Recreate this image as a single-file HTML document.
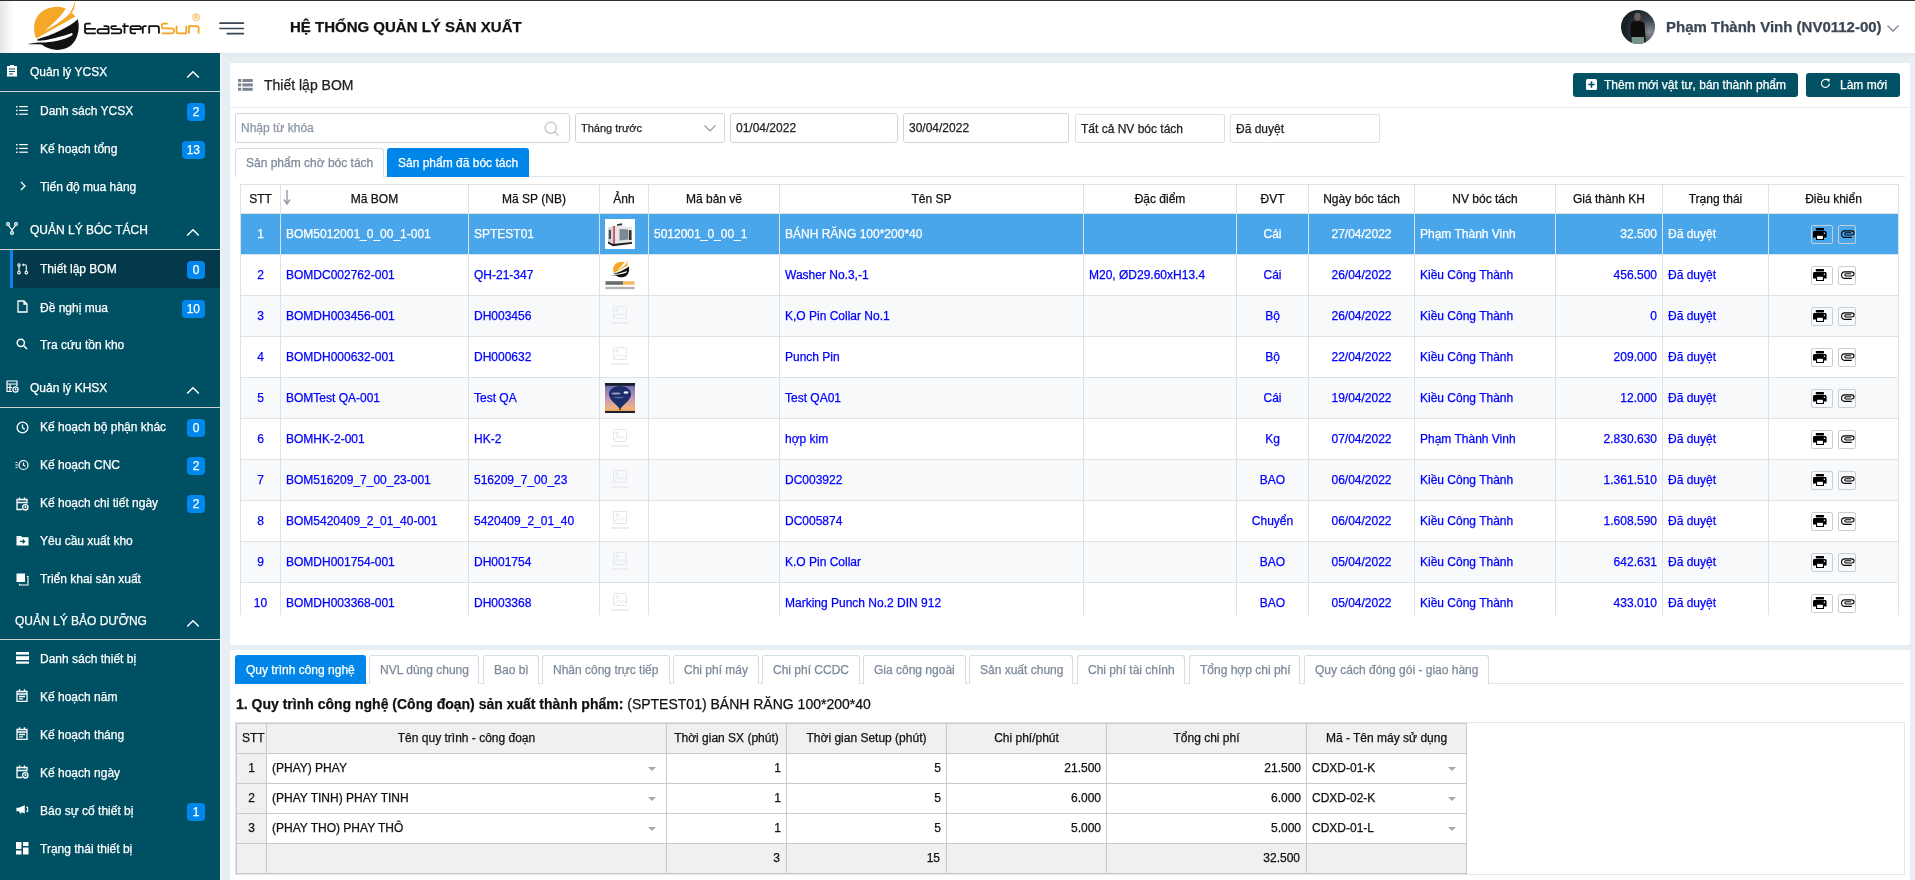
<!DOCTYPE html><html><head><meta charset="utf-8"><title>Thiết lập BOM</title><style>
*{box-sizing:border-box;margin:0;padding:0}
html,body{width:1915px;height:880px;overflow:hidden}
body{position:relative;background:#fff;font-family:"Liberation Sans",sans-serif;font-size:12px;color:#222}
#root{-webkit-text-stroke-width:0.25px}
.abs{position:absolute}
.topline{position:absolute;left:0;top:0;width:1915px;height:1px;background:#2c2e2e}
.lgrad{position:absolute;left:0;top:1px;width:14px;height:52px;background:linear-gradient(to right,#e3e5e7,#fff)}
.title{position:absolute;left:290px;top:18px;font-weight:bold;font-size:15px;line-height:18px;color:#111;white-space:nowrap}
.uname{position:absolute;left:1666px;top:18px;font-weight:bold;font-size:15px;line-height:18px;color:#3b4753;white-space:nowrap}
.side{position:absolute;left:0;top:53px;width:220px;height:827px;background:#005064}
.sep{position:absolute;left:0;width:220px;height:1px;background:#cfd2cf}
.grp{position:absolute;left:0;width:220px;height:38px;line-height:38px;color:#fff;font-size:12px;white-space:nowrap}
.grp .t{position:absolute;left:30px;top:0}
.item{position:absolute;left:0;width:220px;height:38px;line-height:38px;color:#fff;font-size:12px;white-space:nowrap}
.item .t{position:absolute;left:40px;top:0}
.item.act{left:10px;width:210px;background:#03394a;border-left:3px solid #0787ec}
.item.act .t{left:27px}
.badge{position:absolute;right:15px;top:11px;height:18px;min-width:18px;padding:0 5px;border-radius:4px;background:#0087ec;color:#fff;font-size:12px;line-height:18px;text-align:center}
.ico{position:absolute}
.main{position:absolute;left:221px;top:53px;width:1694px;height:827px;background:linear-gradient(to bottom,#dfe6eb 0,#e7eff2 4px,#e7eff2 100%)}
.wline{position:absolute;left:220px;top:53px;width:1px;height:827px;background:#eef4f7}
.panel{position:absolute;background:#fff;border-radius:4px}
.btn{position:absolute;top:73px;height:24px;background:#015064;border-radius:3px;color:#fff;font-size:12px;line-height:24px;white-space:nowrap}
.inp{position:absolute;height:30px;border:1px solid #cfd6dc;border-radius:3px;background:#fff;font-size:12px;line-height:28px;white-space:nowrap;color:#222}
.tab{position:absolute;height:29px;border:1px solid #d5dce2;border-bottom:none;border-radius:3px 3px 0 0;background:#fff;color:#7d8a99;font-size:12px;line-height:29px;padding:0 10px;white-space:nowrap}
.tab.on{background:#0085e9;border-color:#0085e9;color:#fff}
table{border-collapse:collapse;table-layout:fixed}
.mt{position:absolute;left:240px;top:184px}
.mt td,.mt th{border:1px solid #dde2e7;font-size:12px;font-weight:normal;white-space:nowrap;overflow:hidden;padding:0 5px}
.mt th{height:29px;color:#111;text-align:center;background:#fff}
.mt td{height:41px;color:#0000ff}
.mt tr.odd td{background:#f7f9fb}
.mt tr.sel td{background:#49a6eb;color:#fff}
.c{text-align:center}.r{text-align:right}
.bt{position:absolute;left:236px;top:723px}
.bt td{border:1px solid #c9c9c9;font-size:12px;height:30px;white-space:nowrap;overflow:hidden;padding:0 5px 2px;color:#111}
.bt tr.h td{background:#f0f0f0;text-align:center}
.bt tr.f td{background:#f0f0f0}
.bt tr.f td.r{padding-right:6px}
.dd{position:relative}
.caret{position:absolute;right:10px;top:13px;width:0;height:0;border-left:4px solid transparent;border-right:4px solid transparent;border-top:4px solid #a9a9a9}
.ibtn{display:inline-block;vertical-align:middle;height:19px;border:1px solid #c8ced4;border-radius:2px;background:transparent;position:relative}
</style></head><body><div id="root" style="position:absolute;left:0;top:0;width:1915px;height:880px;overflow:hidden;will-change:transform">
<div class="topline"></div><div class="lgrad"></div>
<svg class="abs" style="left:20px;top:0" width="70" height="53" viewBox="0 0 1162 880">
<path d="M760,140 C600,70 380,130 290,270 C210,390 225,540 270,640 L920,275 L850,200 Z" fill="#f5a828"/>
<path d="M415,510 C560,380 700,250 760,140 L850,200 C720,330 560,440 415,510 Z" fill="#fff"/>
<path d="M832,198 C870,150 900,90 905,12 C922,95 898,165 860,210 Z" fill="#f5a828"/>
<path d="M960,320 C1000,480 960,660 840,760 C720,850 520,860 360,740 C260,730 180,740 130,730 C200,710 330,700 420,705 C600,690 800,640 870,580 C880,560 870,545 850,550 C700,600 480,670 290,675 L290,650 C520,590 800,460 960,320 Z" fill="#111"/>
</svg>
<svg class="abs" style="left:80px;top:8px" width="130" height="32" viewBox="80 8 130 32" fill="none" stroke-linecap="butt" stroke-linejoin="round">
<g stroke="#111" stroke-width="1.8">
<path d="M90.8,23.7 L86.8,23.7 Q85,23.7 85,25.5 L85,31.5 Q85,33.3 86.8,33.3 L95.8,33.3 M85,28.8 L95.8,28.8"/>
<path d="M103.6,26.1 L106.8,26.1 Q108.6,26.1 108.6,27.9 L108.6,33.3 L99.4,33.3 Q97.6,33.3 97.6,31.5 L97.6,30.9 Q97.6,29.1 99.4,29.1 L108.6,29.1"/>
<path d="M116.6,26.1 L112.8,26.1 Q111.2,26.1 111.2,27.6 Q111.2,29.1 112.8,29.1 L119.6,29.1 Q121.3,29.1 121.3,31.2 Q121.3,33.3 119.5,33.3 L111,33.3"/>
<path d="M124.5,23.2 L124.5,33.4 M122.3,26.2 L128.7,26.2"/>
<path d="M136,33.3 L132.3,33.3 Q130.5,33.3 130.5,31.5 L130.5,27.9 Q130.5,26.1 132.3,26.1 L139.1,26.1 Q140.9,26.1 140.9,27.9 L140.9,29.1 L130.5,29.1"/>
<path d="M142.8,33.5 L142.8,27.8 Q142.8,26.1 144.6,26.1 L146.6,26.1"/>
<path d="M149.2,33.5 L149.2,26.1 L157.1,26.1 Q158.9,26.1 158.9,27.9 L158.9,33.5"/>
</g>
<g stroke="#f5a41f" stroke-width="1.8">
<path d="M167.8,23.6 L163.6,23.6 Q161.8,23.6 161.8,25.6 L161.8,26.3 Q161.8,28.3 163.6,28.3 L172,28.3 Q173.9,28.3 173.9,30.4 L173.9,31.5 Q173.9,33.4 172,33.4 L161.6,33.4"/>
<path d="M176.5,25.8 L176.5,31.6 Q176.5,33.4 178.3,33.4 L186.3,33.4 L186.3,25.8"/>
<path d="M189,33.5 L189,26.1 L196.8,26.1 Q198.6,26.1 198.6,27.9 L198.6,33.5"/>
<circle cx="196.2" cy="17.2" r="3.5" stroke-width="0.7"/>
<path d="M195.1,19.3 L195.1,15.2 L196.6,15.2 Q197.6,15.2 197.6,16.2 Q197.6,17.2 196.6,17.2 L195.1,17.2 M196.5,17.2 L197.7,19.3" stroke-width="0.7"/>
</g>
</svg>
<svg class="abs" style="left:218px;top:20px" width="28" height="16" viewBox="0 0 28 16">
<g stroke="#3a4655" stroke-width="1.7" stroke-linecap="round"><path d="M2,3.2 L25.4,3.2 M2,8.5 L25.4,8.5 M9.3,13.7 L25.4,13.7"/></g></svg>
<div class="title">HỆ THỐNG QUẢN LÝ SẢN XUẤT</div>
<svg class="abs" style="left:1621px;top:10px" width="34" height="34" viewBox="0 0 34 34">
<defs><radialGradient id="av" cx="85%" cy="65%" r="75%"><stop offset="0" stop-color="#8a8e98"/><stop offset="0.5" stop-color="#3a4046"/><stop offset="1" stop-color="#182226"/></radialGradient>
<clipPath id="avc"><circle cx="17" cy="17" r="17"/></clipPath><filter id="avb" x="-20%" y="-20%" width="140%" height="140%"><feGaussianBlur stdDeviation="0.7"/></filter></defs>
<circle cx="17" cy="17" r="17" fill="url(#av)"/>
<g clip-path="url(#avc)"><g filter="url(#avb)"><ellipse cx="16.5" cy="6.8" rx="3.2" ry="4" fill="#6e5e58"/><path d="M9.5,34 L9.8,14 C10,12 12.5,11.3 16.5,11.3 C20.5,11.3 23,12 23.5,14 L25,34 Z" fill="#0c0c0c"/><path d="M10.5,27 L23,27 L23.5,34 L10.5,34 Z" fill="#75938b"/></g></g>
</svg>
<div class="uname">Phạm Thành Vinh (NV0112-00)</div>
<svg class="abs" style="left:1886px;top:23px" width="14" height="11" viewBox="0 0 14 11"><path d="M1.5,2.5 L7,8 L12.5,2.5" fill="none" stroke="#7b8794" stroke-width="1.3"/></svg>
<div class="side"></div>
<div class="grp" style="top:53px"><span class="t" style="left:30px">Quản lý YCSX</span></div>
<div class="ico" style="left:6px;top:64px"><svg width="12" height="13" viewBox="0 0 12 13"><path d="M1,2 L4,2 L4,1 L8,1 L8,2 L11,2 L11,12.5 L1,12.5 Z" fill="#fff"/><path d="M3,5 L9,5 M3,7.5 L9,7.5 M3,10 L7,10" stroke="#005064" stroke-width="1.2"/></svg></div>
<div class="ico" style="left:186px;top:68px"><svg width="14" height="9" viewBox="0 0 14 9"><path d="M1.2,7.5 L7,1.8 L12.8,7.5" fill="none" stroke="#fff" stroke-width="1.5"/></svg></div>
<div class="sep" style="top:91px"></div>
<div class="item" style="top:92px"><span class="t">Danh sách YCSX</span><span class="badge">2</span></div>
<div class="ico" style="left:16px;top:105px;line-height:0"><svg width="12" height="11" viewBox="0 0 12 11"><g fill="#fff"><rect x="0" y="1" width="1.6" height="1.4"/><rect x="0" y="4.8" width="1.6" height="1.4"/><rect x="0" y="8.6" width="1.6" height="1.4"/><rect x="3.2" y="1" width="8.6" height="1.2"/><rect x="3.2" y="4.8" width="8.6" height="1.2"/><rect x="3.2" y="8.6" width="8.6" height="1.2"/></g></svg></div>
<div class="item" style="top:130px"><span class="t">Kế hoạch tổng</span><span class="badge">13</span></div>
<div class="ico" style="left:16px;top:143px;line-height:0"><svg width="12" height="11" viewBox="0 0 12 11"><g fill="#fff"><rect x="0" y="1" width="1.6" height="1.4"/><rect x="0" y="4.8" width="1.6" height="1.4"/><rect x="0" y="8.6" width="1.6" height="1.4"/><rect x="3.2" y="1" width="8.6" height="1.2"/><rect x="3.2" y="4.8" width="8.6" height="1.2"/><rect x="3.2" y="8.6" width="8.6" height="1.2"/></g></svg></div>
<div class="item" style="top:168px"><span class="t">Tiến độ mua hàng</span></div>
<div class="ico" style="left:20px;top:181px;line-height:0"><svg width="6" height="10" viewBox="0 0 6 10"><path d="M1,1 L5,5 L1,9" stroke="#fff" fill="none" stroke-width="1.3"/></svg></div>
<div class="grp" style="top:211px"><span class="t" style="left:30px">QUẢN LÝ BÓC TÁCH</span></div>
<div class="ico" style="left:6px;top:222px"><svg width="12" height="13" viewBox="0 0 12 13"><g stroke="#fff" fill="none" stroke-width="1.2"><circle cx="2" cy="2" r="1.4"/><circle cx="10" cy="2" r="1.4"/><circle cx="6" cy="11" r="1.4"/><path d="M2.5,3.3 L6,8 L9.5,3.3 M6,8 L6,9.6"/></g></svg></div>
<div class="ico" style="left:186px;top:226px"><svg width="14" height="9" viewBox="0 0 14 9"><path d="M1.2,7.5 L7,1.8 L12.8,7.5" fill="none" stroke="#fff" stroke-width="1.5"/></svg></div>
<div class="sep" style="top:249px"></div>
<div class="item act" style="top:250px"><span class="t">Thiết lập BOM</span><span class="badge">0</span></div>
<div class="ico" style="left:17px;top:263px;line-height:0"><svg width="12" height="12" viewBox="0 0 12 12"><g stroke="#fff" fill="none" stroke-width="1.1"><circle cx="2" cy="1.9" r="1.2"/><circle cx="2" cy="9.6" r="1.3"/><circle cx="9.3" cy="9.6" r="1.3"/><path d="M2,3.1 L2,8.3 M9.3,8.3 L9.3,3.2 C9.3,2.3 8.8,1.8 8,1.8 L6,1.8"/><path d="M6.8,0.2 L5,1.8 L6.8,3.4 Z" fill="#fff" stroke="none"/></g></svg></div>
<div class="item" style="top:289px"><span class="t">Đề nghị mua</span><span class="badge">10</span></div>
<div class="ico" style="left:17px;top:300px;line-height:0"><svg width="11" height="13" viewBox="0 0 11 13"><path d="M1,1 L7,1 L10,4 L10,12 L1,12 Z M7,1 L7,4 L10,4" stroke="#fff" fill="none" stroke-width="1.3"/></svg></div>
<div class="item" style="top:326px"><span class="t">Tra cứu tồn kho</span></div>
<div class="ico" style="left:16px;top:338px;line-height:0"><svg width="12" height="12" viewBox="0 0 12 12"><g stroke="#fff" fill="none" stroke-width="1.5"><circle cx="4.8" cy="4.8" r="3.6"/><path d="M7.5,7.5 L11,11"/></g></svg></div>
<div class="grp" style="top:369px"><span class="t" style="left:30px">Quản lý KHSX</span></div>
<div class="ico" style="left:6px;top:380px"><svg width="13" height="13" viewBox="0 0 13 13"><g stroke="#fff" fill="none" stroke-width="1.2"><path d="M6,11.5 L1,11.5 L1,1 L11,1 L11,6 M1,4 L11,4 M4,4 L4,11.5 M1,7.5 L6,7.5"/><circle cx="9.5" cy="9.5" r="2.6"/><path d="M9.5,8.2 L9.5,9.6 L10.6,9.6"/></g></svg></div>
<div class="ico" style="left:186px;top:384px"><svg width="14" height="9" viewBox="0 0 14 9"><path d="M1.2,7.5 L7,1.8 L12.8,7.5" fill="none" stroke="#fff" stroke-width="1.5"/></svg></div>
<div class="sep" style="top:407px"></div>
<div class="item" style="top:408px"><span class="t">Kế hoạch bộ phận khác</span><span class="badge">0</span></div>
<div class="ico" style="left:16px;top:421px;line-height:0"><svg width="13" height="13" viewBox="0 0 13 13"><g stroke="#fff" fill="none" stroke-width="1.3"><circle cx="6.5" cy="6.5" r="5.4"/><path d="M6.5,3.5 L6.5,6.8 L8.8,8.2"/></g></svg></div>
<div class="item" style="top:446px"><span class="t">Kế hoạch CNC</span><span class="badge">2</span></div>
<div class="ico" style="left:15px;top:459px;line-height:0"><svg width="14" height="12" viewBox="0 0 14 12"><g stroke="#fff" fill="none" stroke-width="1.2"><circle cx="8.5" cy="6" r="4.5"/><path d="M8.5,3.6 L8.5,6.2 L10.3,7.3 M0.5,3.5 L2.5,3.5 M0.5,6 L2.8,6 M0.5,8.5 L2.5,8.5"/></g></svg></div>
<div class="item" style="top:484px"><span class="t">Kế hoạch chi tiết ngày</span><span class="badge">2</span></div>
<div class="ico" style="left:16px;top:497px;line-height:0"><svg width="13" height="14" viewBox="0 0 13 14"><g stroke="#fff" fill="none" stroke-width="1.3"><path d="M6,12.5 L1,12.5 L1,2.5 L11,2.5 L11,6.5 M1,5.5 L11,5.5 M3.5,0.5 L3.5,3.5 M8.5,0.5 L8.5,3.5"/><circle cx="9.3" cy="10.3" r="2.7" fill="#005064"/><path d="M9.3,9 L9.3,10.5 L10.4,10.5"/></g></svg></div>
<div class="item" style="top:522px"><span class="t">Yêu cầu xuất kho</span></div>
<div class="ico" style="left:16px;top:535px;line-height:0"><svg width="13" height="11" viewBox="0 0 13 11"><path d="M0.5,1 L5,1 L6.3,2.3 L12.5,2.3 L12.5,10.5 L0.5,10.5 Z" fill="#fff"/><path d="M4,6.4 L8.3,6.4 M6.8,4.6 L8.6,6.4 L6.8,8.2" stroke="#005064" stroke-width="1.3" fill="none"/></svg></div>
<div class="item" style="top:560px"><span class="t">Triển khai sản xuất</span></div>
<div class="ico" style="left:16px;top:573px;line-height:0"><svg width="13" height="13" viewBox="0 0 13 13"><rect x="0.5" y="0.5" width="8.5" height="8.5" fill="#fff"/><path d="M10.8,3.5 L12,3.5 L12,12 L3.5,12 L3.5,10.8" stroke="#fff" stroke-width="1.1" fill="none"/></svg></div>
<div class="grp" style="top:602px"><span class="t" style="left:15px">QUẢN LÝ BẢO DƯỠNG</span></div>
<div class="ico" style="left:186px;top:617px"><svg width="14" height="9" viewBox="0 0 14 9"><path d="M1.2,7.5 L7,1.8 L12.8,7.5" fill="none" stroke="#fff" stroke-width="1.5"/></svg></div>
<div class="sep" style="top:639px"></div>
<div class="item" style="top:640px"><span class="t">Danh sách thiết bị</span></div>
<div class="ico" style="left:16px;top:652px;line-height:0"><svg width="13" height="12" viewBox="0 0 13 12"><g fill="#fff"><rect x="0" y="0" width="13" height="2.6"/><rect x="0" y="4.2" width="13" height="3.8"/><rect x="0" y="9.5" width="13" height="2.2"/></g></svg></div>
<div class="item" style="top:678px"><span class="t">Kế hoạch năm</span></div>
<div class="ico" style="left:16px;top:689px;line-height:0"><svg width="12" height="13" viewBox="0 0 12 13"><g stroke="#fff" fill="none" stroke-width="1.3"><path d="M1,2.5 L11,2.5 L11,12.3 L1,12.3 Z M1,5 L11,5 M3.5,0.3 L3.5,3 M8.5,0.3 L8.5,3 M3,7.5 L9,7.5 M3,9.8 L7,9.8"/></g></svg></div>
<div class="item" style="top:716px"><span class="t">Kế hoạch tháng</span></div>
<div class="ico" style="left:16px;top:727px;line-height:0"><svg width="12" height="13" viewBox="0 0 12 13"><g stroke="#fff" fill="none" stroke-width="1.3"><path d="M1,2.5 L11,2.5 L11,12.3 L1,12.3 Z M1,5 L11,5 M3.5,0.3 L3.5,3 M8.5,0.3 L8.5,3 M3,7.5 L9,7.5 M3,9.8 L7,9.8"/></g></svg></div>
<div class="item" style="top:754px"><span class="t">Kế hoạch ngày</span></div>
<div class="ico" style="left:16px;top:765px;line-height:0"><svg width="13" height="14" viewBox="0 0 13 14"><g stroke="#fff" fill="none" stroke-width="1.3"><path d="M6,12.5 L1,12.5 L1,2.5 L11,2.5 L11,6.5 M1,5.5 L11,5.5 M3.5,0.5 L3.5,3.5 M8.5,0.5 L8.5,3.5"/><circle cx="9.3" cy="10.3" r="2.7" fill="#005064"/><path d="M9.3,9 L9.3,10.5 L10.4,10.5"/></g></svg></div>
<div class="item" style="top:792px"><span class="t">Báo sự cố thiết bị</span><span class="badge">1</span></div>
<div class="ico" style="left:16px;top:805px;line-height:0"><svg width="13" height="9" viewBox="0 0 13 9"><path d="M0.4,2.8 L2.6,2.8 L8.8,0.3 L8.8,8.5 L2.6,6.2 L0.4,6.2 Z" fill="#fff"/><path d="M3,6.2 L4.2,8.6 L5.6,8.6 L4.8,6.6 Z" fill="#fff"/><path d="M10.4,2.4 L11.6,2.4 L11.6,6.4 L10.4,6.4" fill="none" stroke="#fff" stroke-width="1.1"/></svg></div>
<div class="item" style="top:830px"><span class="t">Trạng thái thiết bị</span></div>
<div class="ico" style="left:16px;top:842px;line-height:0"><svg width="13" height="13" viewBox="0 0 13 13"><g fill="#fff"><rect x="0" y="0" width="5.5" height="7"/><rect x="7" y="0" width="5.5" height="4"/><rect x="0" y="8.5" width="5.5" height="4"/><rect x="7" y="5.5" width="5.5" height="7"/></g></svg></div>
<div class="wline"></div><div class="main"></div>
<div class="panel" style="left:230px;top:63px;width:1680px;height:582px;border-radius:0 0 2px 2px"></div>
<div class="abs" style="left:230px;top:107px;width:1680px;height:1px;background:#e9edf0"></div>
<svg class="abs" style="left:238px;top:79px" width="15" height="12" viewBox="0 0 15 12"><g fill="#7a8594"><rect x="0" y="0" width="3.2" height="3"/><rect x="0" y="4.4" width="3.2" height="3"/><rect x="0" y="8.8" width="3.2" height="3"/><rect x="4.4" y="0" width="10.4" height="3"/><rect x="4.4" y="4.4" width="10.4" height="3"/><rect x="4.4" y="8.8" width="10.4" height="3"/></g></svg>
<div class="abs" style="left:264px;top:77px;font-size:14px;line-height:17px;color:#222;white-space:nowrap">Thiết lập BOM</div>
<div class="btn" style="left:1573px;width:225px"><svg class="abs" style="left:13px;top:6px" width="11" height="11" viewBox="0 0 11 11"><rect x="0" y="0" width="11" height="11" rx="1.5" fill="#fff"/><path d="M5.5,2.3 L5.5,8.7 M2.3,5.5 L8.7,5.5" stroke="#015064" stroke-width="1.6"/></svg><span class="abs" style="left:31px;top:0">Thêm mới vật tư, bán thành phẩm</span></div>
<div class="btn" style="left:1806px;width:94px"><svg class="abs" style="left:14px;top:5px" width="11" height="11" viewBox="0 0 11 11"><path d="M9.4,5.6 A4,4 0 1 1 7.9,2.3" fill="none" stroke="#fff" stroke-width="1.15"/><path d="M6.2,0.6 L9.8,0.9 L9.2,4.4 Z" fill="#fff"/></svg><span class="abs" style="left:34px;top:0">Làm mới</span></div>
<div class="inp" style="left:235px;top:113px;width:335px;color:#8c97a4;padding-left:5px">Nhập từ khóa<svg class="abs" style="left:308px;top:7px" width="16" height="16" viewBox="0 0 16 16"><g fill="none" stroke="#bcc3ca" stroke-width="1.2"><circle cx="6.8" cy="6.8" r="5.6"/><path d="M10.8,10.8 L14.8,14.8"/></g></svg></div>
<div class="inp" style="left:575px;top:113px;width:150px;padding-left:5px;font-size:11px">Tháng trước<svg class="abs" style="left:127px;top:10px" width="14" height="9" viewBox="0 0 14 9"><path d="M1.5,1.5 L7,7 L12.5,1.5" fill="none" stroke="#8e99a5" stroke-width="1.2"/></svg></div>
<div class="inp" style="left:730px;top:113px;width:168px;padding-left:5px">01/04/2022</div>
<div class="inp" style="left:903px;top:113px;width:166px;padding-left:5px">30/04/2022</div>
<div class="inp" style="left:1075px;top:114px;width:150px;height:29px;padding-left:5px;border-color:#dde2e6;border-radius:2px">Tất cả NV bóc tách</div>
<div class="inp" style="left:1230px;top:114px;width:150px;height:29px;padding-left:5px;border-color:#dde2e6;border-radius:2px">Đã duyệt</div>
<div class="abs" style="left:235px;top:176px;width:1670px;height:1px;background:#dfe4e8"></div>
<div class="tab" style="left:235px;top:148px;width:149px">Sản phẩm chờ bóc tách</div>
<div class="tab on" style="left:387px;top:148px;width:142px">Sản phẩm đã bóc tách</div>
<div class="abs" style="left:240px;top:184px;width:1659px;height:431px;overflow:hidden">
<table class="mt" style="left:0;top:0;width:1659px">
<colgroup><col style="width:40px"><col style="width:188px"><col style="width:131px"><col style="width:49px"><col style="width:131px"><col style="width:304px"><col style="width:153px"><col style="width:72px"><col style="width:106px"><col style="width:141px"><col style="width:107px"><col style="width:106px"><col style="width:130px"></colgroup>
<tr><th>STT</th><th>Mã BOM</th><th>Mã SP (NB)</th><th>Ảnh</th><th>Mã bản vẽ</th><th>Tên SP</th><th>Đặc điểm</th><th>ĐVT</th><th>Ngày bóc tách</th><th>NV bóc tách</th><th>Giá thành KH</th><th>Trạng thái</th><th>Điều khiển</th></tr>
<tr class="sel">
<td class="c">1</td><td>BOM5012001_0_00_1-001</td><td>SPTEST01</td><td style="padding:0 0 0 5px"><svg width="30" height="30" viewBox="0 0 30 30" style="display:block"><rect width="30" height="30" fill="#fff"/><path d="M3,9 L8,6.5 L8,26 L3,23 Z" fill="#d3d5d8"/><rect x="3.8" y="11" width="2.2" height="9" fill="#4a4f55"/><path d="M8,6.5 L27,8 L27,24 L8,26 Z" fill="#e6e7e9"/><path d="M8.2,7 L10,7 L10,26 L8.2,26 Z" fill="#cf4b58"/><path d="M14.5,10 L23,10.5 L23,20.5 L14.5,21.5 Z" fill="#7d8894"/><path d="M23.8,11 L26.5,11.2 L26.5,21 L23.8,21 Z" fill="#2e3236"/><path d="M3,22.5 L8,25 L27,23 L27,24.8 L8,27.3 L3,24.6 Z" fill="#1f2124"/><path d="M12,5.2 L17,4.3 L17,6.2 L12,6.7 Z" fill="#2a2d30"/></svg></td><td>5012001_0_00_1</td><td>BÁNH RĂNG 100*200*40</td><td></td><td class="c">Cái</td><td class="c">27/04/2022</td><td>Phạm Thành Vinh</td><td class="r">32.500</td><td>Đã duyệt</td><td><div style="text-align:center;line-height:0;font-size:0"><span class="ibtn" style="width:22px;margin-right:5px"><svg class="abs" style="left:1px;top:2px" width="14" height="12" viewBox="0 0 14 12"><rect x="2.8" y="0" width="8.2" height="2.4" rx="0.6" fill="#000"/><path d="M1.5,3 L12.1,3 C13,3 13.6,3.6 13.6,4.5 L13.6,9.4 L11,9.4 L11,7 L3,7 L3,9.4 L0,9.4 L0,4.5 C0,3.6 0.6,3 1.5,3 Z" fill="#000"/><path d="M3,7 L11,7 L11,12 L3,12 Z" fill="#000"/><rect x="4.1" y="7.8" width="5.8" height="3.2" fill="#fff"/><circle cx="11.4" cy="5.3" r="0.75" fill="#fff"/></svg></span><span class="ibtn" style="width:18px"><svg class="abs" style="left:1.5px;top:4px" width="14" height="8.4" viewBox="0 0 15 9"><path d="M11.5,7.9 L3.8,7.9 C1.8,7.9 0.6,6.2 0.6,4.4 C0.6,2.5 1.9,0.9 3.9,0.9 L11.4,0.9 C13,0.9 14,2 14,3.3 C14,4.6 12.9,5.3 11.4,5.3 L5.2,5.3 C4.4,5.3 4,4.9 4,4.1 C4,3.4 4.5,3 5.2,3 L11,3" fill="none" stroke="#000" stroke-width="1.15"/></svg></span></div></td>
</tr>
<tr class="">
<td class="c">2</td><td>BOMDC002762-001</td><td>QH-21-347</td><td style="padding:0 0 0 5px"><svg width="30" height="30" viewBox="0 0 30 30" style="display:block"><svg x="3" y="-0.7" width="25.3" height="19.2" viewBox="0 0 1162 880">
<path d="M760,140 C600,70 380,130 290,270 C210,390 225,540 270,640 L920,275 L850,200 Z" fill="#f5a828"/>
<path d="M415,510 C560,380 700,250 760,140 L850,200 C720,330 560,440 415,510 Z" fill="#fff"/>
<path d="M800,235 C860,170 895,100 905,15 C925,100 900,170 860,215 Z" fill="#f5a828"/>
<path d="M960,320 C1000,480 960,660 840,760 C720,850 520,860 360,740 C260,730 180,740 130,730 C200,710 330,700 420,705 C600,690 800,640 870,580 C880,560 870,545 850,550 C700,600 480,670 290,675 L290,650 C520,590 800,460 960,320 Z" fill="#111"/>
</svg><rect x="0.5" y="21.2" width="17.5" height="3.6" fill="#3a3a3a" opacity="0.75"/><rect x="18" y="21.2" width="11.5" height="3.6" fill="#f2ad3a" opacity="0.8"/><rect x="0.5" y="26.8" width="29" height="2.4" fill="#555" opacity="0.45"/></svg></td><td></td><td>Washer No.3,-1</td><td>M20, ØD29.60xH13.4</td><td class="c">Cái</td><td class="c">26/04/2022</td><td>Kiều Công Thành</td><td class="r">456.500</td><td>Đã duyệt</td><td><div style="text-align:center;line-height:0;font-size:0"><span class="ibtn" style="width:22px;margin-right:5px"><svg class="abs" style="left:1px;top:2px" width="14" height="12" viewBox="0 0 14 12"><rect x="2.8" y="0" width="8.2" height="2.4" rx="0.6" fill="#000"/><path d="M1.5,3 L12.1,3 C13,3 13.6,3.6 13.6,4.5 L13.6,9.4 L11,9.4 L11,7 L3,7 L3,9.4 L0,9.4 L0,4.5 C0,3.6 0.6,3 1.5,3 Z" fill="#000"/><path d="M3,7 L11,7 L11,12 L3,12 Z" fill="#000"/><rect x="4.1" y="7.8" width="5.8" height="3.2" fill="#fff"/><circle cx="11.4" cy="5.3" r="0.75" fill="#fff"/></svg></span><span class="ibtn" style="width:18px"><svg class="abs" style="left:1.5px;top:4px" width="14" height="8.4" viewBox="0 0 15 9"><path d="M11.5,7.9 L3.8,7.9 C1.8,7.9 0.6,6.2 0.6,4.4 C0.6,2.5 1.9,0.9 3.9,0.9 L11.4,0.9 C13,0.9 14,2 14,3.3 C14,4.6 12.9,5.3 11.4,5.3 L5.2,5.3 C4.4,5.3 4,4.9 4,4.1 C4,3.4 4.5,3 5.2,3 L11,3" fill="none" stroke="#000" stroke-width="1.15"/></svg></span></div></td>
</tr>
<tr class="odd">
<td class="c">3</td><td>BOMDH003456-001</td><td>DH003456</td><td style="padding:0 0 0 5px"><svg width="30" height="30" viewBox="0 0 30 30" style="display:block"><g fill="none" stroke="#e3e6ea" stroke-width="1"><rect x="8.5" y="5.5" width="13" height="12" rx="1"/><path d="M9,16 L13,12 L16,14.5 L18.5,12.5 L21,15"/><circle cx="12" cy="9" r="1.2"/></g><rect x="6" y="21" width="18" height="2" fill="#eceef1"/></svg></td><td></td><td>K,O Pin Collar No.1</td><td></td><td class="c">Bộ</td><td class="c">26/04/2022</td><td>Kiều Công Thành</td><td class="r">0</td><td>Đã duyệt</td><td><div style="text-align:center;line-height:0;font-size:0"><span class="ibtn" style="width:22px;margin-right:5px"><svg class="abs" style="left:1px;top:2px" width="14" height="12" viewBox="0 0 14 12"><rect x="2.8" y="0" width="8.2" height="2.4" rx="0.6" fill="#000"/><path d="M1.5,3 L12.1,3 C13,3 13.6,3.6 13.6,4.5 L13.6,9.4 L11,9.4 L11,7 L3,7 L3,9.4 L0,9.4 L0,4.5 C0,3.6 0.6,3 1.5,3 Z" fill="#000"/><path d="M3,7 L11,7 L11,12 L3,12 Z" fill="#000"/><rect x="4.1" y="7.8" width="5.8" height="3.2" fill="#fff"/><circle cx="11.4" cy="5.3" r="0.75" fill="#fff"/></svg></span><span class="ibtn" style="width:18px"><svg class="abs" style="left:1.5px;top:4px" width="14" height="8.4" viewBox="0 0 15 9"><path d="M11.5,7.9 L3.8,7.9 C1.8,7.9 0.6,6.2 0.6,4.4 C0.6,2.5 1.9,0.9 3.9,0.9 L11.4,0.9 C13,0.9 14,2 14,3.3 C14,4.6 12.9,5.3 11.4,5.3 L5.2,5.3 C4.4,5.3 4,4.9 4,4.1 C4,3.4 4.5,3 5.2,3 L11,3" fill="none" stroke="#000" stroke-width="1.15"/></svg></span></div></td>
</tr>
<tr class="">
<td class="c">4</td><td>BOMDH000632-001</td><td>DH000632</td><td style="padding:0 0 0 5px"><svg width="30" height="30" viewBox="0 0 30 30" style="display:block"><g fill="none" stroke="#e3e6ea" stroke-width="1"><rect x="8.5" y="5.5" width="13" height="12" rx="1"/><path d="M9,16 L13,12 L16,14.5 L18.5,12.5 L21,15"/><circle cx="12" cy="9" r="1.2"/></g><rect x="6" y="21" width="18" height="2" fill="#eceef1"/></svg></td><td></td><td>Punch Pin</td><td></td><td class="c">Bộ</td><td class="c">22/04/2022</td><td>Kiều Công Thành</td><td class="r">209.000</td><td>Đã duyệt</td><td><div style="text-align:center;line-height:0;font-size:0"><span class="ibtn" style="width:22px;margin-right:5px"><svg class="abs" style="left:1px;top:2px" width="14" height="12" viewBox="0 0 14 12"><rect x="2.8" y="0" width="8.2" height="2.4" rx="0.6" fill="#000"/><path d="M1.5,3 L12.1,3 C13,3 13.6,3.6 13.6,4.5 L13.6,9.4 L11,9.4 L11,7 L3,7 L3,9.4 L0,9.4 L0,4.5 C0,3.6 0.6,3 1.5,3 Z" fill="#000"/><path d="M3,7 L11,7 L11,12 L3,12 Z" fill="#000"/><rect x="4.1" y="7.8" width="5.8" height="3.2" fill="#fff"/><circle cx="11.4" cy="5.3" r="0.75" fill="#fff"/></svg></span><span class="ibtn" style="width:18px"><svg class="abs" style="left:1.5px;top:4px" width="14" height="8.4" viewBox="0 0 15 9"><path d="M11.5,7.9 L3.8,7.9 C1.8,7.9 0.6,6.2 0.6,4.4 C0.6,2.5 1.9,0.9 3.9,0.9 L11.4,0.9 C13,0.9 14,2 14,3.3 C14,4.6 12.9,5.3 11.4,5.3 L5.2,5.3 C4.4,5.3 4,4.9 4,4.1 C4,3.4 4.5,3 5.2,3 L11,3" fill="none" stroke="#000" stroke-width="1.15"/></svg></span></div></td>
</tr>
<tr class="odd">
<td class="c">5</td><td>BOMTest QA-001</td><td>Test QA</td><td style="padding:0 0 0 5px"><svg width="30" height="30" viewBox="0 0 30 30" style="display:block"><defs><linearGradient id="g5" x1="0" y1="0" x2="0" y2="1"><stop offset="0" stop-color="#1b1d2c"/><stop offset="0.08" stop-color="#1b1d2c"/><stop offset="0.1" stop-color="#6f70b4"/><stop offset="0.55" stop-color="#c89cb0"/><stop offset="0.85" stop-color="#f0b27a"/><stop offset="0.92" stop-color="#e8a060"/><stop offset="0.94" stop-color="#1e1e28"/><stop offset="1" stop-color="#1e1e28"/></linearGradient></defs><rect width="30" height="30" fill="url(#g5)"/><path d="M15,3 C8,3 3.5,7 4,12 C4.5,17 11,21 14,25 L16,25 C19,21 25.5,17 26,12 C26.5,7 22,3 15,3 Z" fill="#1d2d6a"/><ellipse cx="11" cy="10.5" rx="4.5" ry="1" fill="#9aa0c0"/><ellipse cx="21" cy="9.5" rx="2.5" ry="1.2" fill="#eef"/><ellipse cx="14" cy="14.5" rx="5" ry="0.8" fill="#5a6aa0"/><rect x="14" y="25.3" width="2" height="1.6" fill="#333"/></svg></td><td></td><td>Test QA01</td><td></td><td class="c">Cái</td><td class="c">19/04/2022</td><td>Kiều Công Thành</td><td class="r">12.000</td><td>Đã duyệt</td><td><div style="text-align:center;line-height:0;font-size:0"><span class="ibtn" style="width:22px;margin-right:5px"><svg class="abs" style="left:1px;top:2px" width="14" height="12" viewBox="0 0 14 12"><rect x="2.8" y="0" width="8.2" height="2.4" rx="0.6" fill="#000"/><path d="M1.5,3 L12.1,3 C13,3 13.6,3.6 13.6,4.5 L13.6,9.4 L11,9.4 L11,7 L3,7 L3,9.4 L0,9.4 L0,4.5 C0,3.6 0.6,3 1.5,3 Z" fill="#000"/><path d="M3,7 L11,7 L11,12 L3,12 Z" fill="#000"/><rect x="4.1" y="7.8" width="5.8" height="3.2" fill="#fff"/><circle cx="11.4" cy="5.3" r="0.75" fill="#fff"/></svg></span><span class="ibtn" style="width:18px"><svg class="abs" style="left:1.5px;top:4px" width="14" height="8.4" viewBox="0 0 15 9"><path d="M11.5,7.9 L3.8,7.9 C1.8,7.9 0.6,6.2 0.6,4.4 C0.6,2.5 1.9,0.9 3.9,0.9 L11.4,0.9 C13,0.9 14,2 14,3.3 C14,4.6 12.9,5.3 11.4,5.3 L5.2,5.3 C4.4,5.3 4,4.9 4,4.1 C4,3.4 4.5,3 5.2,3 L11,3" fill="none" stroke="#000" stroke-width="1.15"/></svg></span></div></td>
</tr>
<tr class="">
<td class="c">6</td><td>BOMHK-2-001</td><td>HK-2</td><td style="padding:0 0 0 5px"><svg width="30" height="30" viewBox="0 0 30 30" style="display:block"><g fill="none" stroke="#e3e6ea" stroke-width="1"><rect x="8.5" y="5.5" width="13" height="12" rx="1"/><path d="M9,16 L13,12 L16,14.5 L18.5,12.5 L21,15"/><circle cx="12" cy="9" r="1.2"/></g><rect x="6" y="21" width="18" height="2" fill="#eceef1"/></svg></td><td></td><td>hợp kim</td><td></td><td class="c">Kg</td><td class="c">07/04/2022</td><td>Phạm Thành Vinh</td><td class="r">2.830.630</td><td>Đã duyệt</td><td><div style="text-align:center;line-height:0;font-size:0"><span class="ibtn" style="width:22px;margin-right:5px"><svg class="abs" style="left:1px;top:2px" width="14" height="12" viewBox="0 0 14 12"><rect x="2.8" y="0" width="8.2" height="2.4" rx="0.6" fill="#000"/><path d="M1.5,3 L12.1,3 C13,3 13.6,3.6 13.6,4.5 L13.6,9.4 L11,9.4 L11,7 L3,7 L3,9.4 L0,9.4 L0,4.5 C0,3.6 0.6,3 1.5,3 Z" fill="#000"/><path d="M3,7 L11,7 L11,12 L3,12 Z" fill="#000"/><rect x="4.1" y="7.8" width="5.8" height="3.2" fill="#fff"/><circle cx="11.4" cy="5.3" r="0.75" fill="#fff"/></svg></span><span class="ibtn" style="width:18px"><svg class="abs" style="left:1.5px;top:4px" width="14" height="8.4" viewBox="0 0 15 9"><path d="M11.5,7.9 L3.8,7.9 C1.8,7.9 0.6,6.2 0.6,4.4 C0.6,2.5 1.9,0.9 3.9,0.9 L11.4,0.9 C13,0.9 14,2 14,3.3 C14,4.6 12.9,5.3 11.4,5.3 L5.2,5.3 C4.4,5.3 4,4.9 4,4.1 C4,3.4 4.5,3 5.2,3 L11,3" fill="none" stroke="#000" stroke-width="1.15"/></svg></span></div></td>
</tr>
<tr class="odd">
<td class="c">7</td><td>BOM516209_7_00_23-001</td><td>516209_7_00_23</td><td style="padding:0 0 0 5px"><svg width="30" height="30" viewBox="0 0 30 30" style="display:block"><g fill="none" stroke="#e3e6ea" stroke-width="1"><rect x="8.5" y="5.5" width="13" height="12" rx="1"/><path d="M9,16 L13,12 L16,14.5 L18.5,12.5 L21,15"/><circle cx="12" cy="9" r="1.2"/></g><rect x="6" y="21" width="18" height="2" fill="#eceef1"/></svg></td><td></td><td>DC003922</td><td></td><td class="c">BAO</td><td class="c">06/04/2022</td><td>Kiều Công Thành</td><td class="r">1.361.510</td><td>Đã duyệt</td><td><div style="text-align:center;line-height:0;font-size:0"><span class="ibtn" style="width:22px;margin-right:5px"><svg class="abs" style="left:1px;top:2px" width="14" height="12" viewBox="0 0 14 12"><rect x="2.8" y="0" width="8.2" height="2.4" rx="0.6" fill="#000"/><path d="M1.5,3 L12.1,3 C13,3 13.6,3.6 13.6,4.5 L13.6,9.4 L11,9.4 L11,7 L3,7 L3,9.4 L0,9.4 L0,4.5 C0,3.6 0.6,3 1.5,3 Z" fill="#000"/><path d="M3,7 L11,7 L11,12 L3,12 Z" fill="#000"/><rect x="4.1" y="7.8" width="5.8" height="3.2" fill="#fff"/><circle cx="11.4" cy="5.3" r="0.75" fill="#fff"/></svg></span><span class="ibtn" style="width:18px"><svg class="abs" style="left:1.5px;top:4px" width="14" height="8.4" viewBox="0 0 15 9"><path d="M11.5,7.9 L3.8,7.9 C1.8,7.9 0.6,6.2 0.6,4.4 C0.6,2.5 1.9,0.9 3.9,0.9 L11.4,0.9 C13,0.9 14,2 14,3.3 C14,4.6 12.9,5.3 11.4,5.3 L5.2,5.3 C4.4,5.3 4,4.9 4,4.1 C4,3.4 4.5,3 5.2,3 L11,3" fill="none" stroke="#000" stroke-width="1.15"/></svg></span></div></td>
</tr>
<tr class="">
<td class="c">8</td><td>BOM5420409_2_01_40-001</td><td>5420409_2_01_40</td><td style="padding:0 0 0 5px"><svg width="30" height="30" viewBox="0 0 30 30" style="display:block"><g fill="none" stroke="#e3e6ea" stroke-width="1"><rect x="8.5" y="5.5" width="13" height="12" rx="1"/><path d="M9,16 L13,12 L16,14.5 L18.5,12.5 L21,15"/><circle cx="12" cy="9" r="1.2"/></g><rect x="6" y="21" width="18" height="2" fill="#eceef1"/></svg></td><td></td><td>DC005874</td><td></td><td class="c">Chuyển</td><td class="c">06/04/2022</td><td>Kiều Công Thành</td><td class="r">1.608.590</td><td>Đã duyệt</td><td><div style="text-align:center;line-height:0;font-size:0"><span class="ibtn" style="width:22px;margin-right:5px"><svg class="abs" style="left:1px;top:2px" width="14" height="12" viewBox="0 0 14 12"><rect x="2.8" y="0" width="8.2" height="2.4" rx="0.6" fill="#000"/><path d="M1.5,3 L12.1,3 C13,3 13.6,3.6 13.6,4.5 L13.6,9.4 L11,9.4 L11,7 L3,7 L3,9.4 L0,9.4 L0,4.5 C0,3.6 0.6,3 1.5,3 Z" fill="#000"/><path d="M3,7 L11,7 L11,12 L3,12 Z" fill="#000"/><rect x="4.1" y="7.8" width="5.8" height="3.2" fill="#fff"/><circle cx="11.4" cy="5.3" r="0.75" fill="#fff"/></svg></span><span class="ibtn" style="width:18px"><svg class="abs" style="left:1.5px;top:4px" width="14" height="8.4" viewBox="0 0 15 9"><path d="M11.5,7.9 L3.8,7.9 C1.8,7.9 0.6,6.2 0.6,4.4 C0.6,2.5 1.9,0.9 3.9,0.9 L11.4,0.9 C13,0.9 14,2 14,3.3 C14,4.6 12.9,5.3 11.4,5.3 L5.2,5.3 C4.4,5.3 4,4.9 4,4.1 C4,3.4 4.5,3 5.2,3 L11,3" fill="none" stroke="#000" stroke-width="1.15"/></svg></span></div></td>
</tr>
<tr class="odd">
<td class="c">9</td><td>BOMDH001754-001</td><td>DH001754</td><td style="padding:0 0 0 5px"><svg width="30" height="30" viewBox="0 0 30 30" style="display:block"><g fill="none" stroke="#e3e6ea" stroke-width="1"><rect x="8.5" y="5.5" width="13" height="12" rx="1"/><path d="M9,16 L13,12 L16,14.5 L18.5,12.5 L21,15"/><circle cx="12" cy="9" r="1.2"/></g><rect x="6" y="21" width="18" height="2" fill="#eceef1"/></svg></td><td></td><td>K.O Pin Collar</td><td></td><td class="c">BAO</td><td class="c">05/04/2022</td><td>Kiều Công Thành</td><td class="r">642.631</td><td>Đã duyệt</td><td><div style="text-align:center;line-height:0;font-size:0"><span class="ibtn" style="width:22px;margin-right:5px"><svg class="abs" style="left:1px;top:2px" width="14" height="12" viewBox="0 0 14 12"><rect x="2.8" y="0" width="8.2" height="2.4" rx="0.6" fill="#000"/><path d="M1.5,3 L12.1,3 C13,3 13.6,3.6 13.6,4.5 L13.6,9.4 L11,9.4 L11,7 L3,7 L3,9.4 L0,9.4 L0,4.5 C0,3.6 0.6,3 1.5,3 Z" fill="#000"/><path d="M3,7 L11,7 L11,12 L3,12 Z" fill="#000"/><rect x="4.1" y="7.8" width="5.8" height="3.2" fill="#fff"/><circle cx="11.4" cy="5.3" r="0.75" fill="#fff"/></svg></span><span class="ibtn" style="width:18px"><svg class="abs" style="left:1.5px;top:4px" width="14" height="8.4" viewBox="0 0 15 9"><path d="M11.5,7.9 L3.8,7.9 C1.8,7.9 0.6,6.2 0.6,4.4 C0.6,2.5 1.9,0.9 3.9,0.9 L11.4,0.9 C13,0.9 14,2 14,3.3 C14,4.6 12.9,5.3 11.4,5.3 L5.2,5.3 C4.4,5.3 4,4.9 4,4.1 C4,3.4 4.5,3 5.2,3 L11,3" fill="none" stroke="#000" stroke-width="1.15"/></svg></span></div></td>
</tr>
<tr class="">
<td class="c">10</td><td>BOMDH003368-001</td><td>DH003368</td><td style="padding:0 0 0 5px"><svg width="30" height="30" viewBox="0 0 30 30" style="display:block"><g fill="none" stroke="#e3e6ea" stroke-width="1"><rect x="8.5" y="5.5" width="13" height="12" rx="1"/><path d="M9,16 L13,12 L16,14.5 L18.5,12.5 L21,15"/><circle cx="12" cy="9" r="1.2"/></g><rect x="6" y="21" width="18" height="2" fill="#eceef1"/></svg></td><td></td><td>Marking Punch No.2 DIN 912</td><td></td><td class="c">BAO</td><td class="c">05/04/2022</td><td>Kiều Công Thành</td><td class="r">433.010</td><td>Đã duyệt</td><td><div style="text-align:center;line-height:0;font-size:0"><span class="ibtn" style="width:22px;margin-right:5px"><svg class="abs" style="left:1px;top:2px" width="14" height="12" viewBox="0 0 14 12"><rect x="2.8" y="0" width="8.2" height="2.4" rx="0.6" fill="#000"/><path d="M1.5,3 L12.1,3 C13,3 13.6,3.6 13.6,4.5 L13.6,9.4 L11,9.4 L11,7 L3,7 L3,9.4 L0,9.4 L0,4.5 C0,3.6 0.6,3 1.5,3 Z" fill="#000"/><path d="M3,7 L11,7 L11,12 L3,12 Z" fill="#000"/><rect x="4.1" y="7.8" width="5.8" height="3.2" fill="#fff"/><circle cx="11.4" cy="5.3" r="0.75" fill="#fff"/></svg></span><span class="ibtn" style="width:18px"><svg class="abs" style="left:1.5px;top:4px" width="14" height="8.4" viewBox="0 0 15 9"><path d="M11.5,7.9 L3.8,7.9 C1.8,7.9 0.6,6.2 0.6,4.4 C0.6,2.5 1.9,0.9 3.9,0.9 L11.4,0.9 C13,0.9 14,2 14,3.3 C14,4.6 12.9,5.3 11.4,5.3 L5.2,5.3 C4.4,5.3 4,4.9 4,4.1 C4,3.4 4.5,3 5.2,3 L11,3" fill="none" stroke="#000" stroke-width="1.15"/></svg></span></div></td>
</tr>
</table></div>
<svg class="abs" style="left:283px;top:189px" width="8" height="16" viewBox="0 0 8 16"><path d="M4,1 L4,14" stroke="#8e99a8" stroke-width="1.4"/><path d="M1,10.5 L4,15 L7,10.5" fill="none" stroke="#8e99a8" stroke-width="1.4"/></svg>
<div class="panel" style="left:230px;top:650px;width:1680px;height:240px;border-radius:2px"></div>
<div class="abs" style="left:235px;top:683px;width:1669px;height:1px;background:#dfe4e8"></div>
<div class="tab on" style="left:235px;top:655px;width:131px;height:29px">Quy trình công nghệ</div>
<div class="tab" style="left:369px;top:655px;width:110px;height:29px">NVL dùng chung</div>
<div class="tab" style="left:483px;top:655px;width:56px;height:29px">Bao bì</div>
<div class="tab" style="left:542px;top:655px;width:128px;height:29px">Nhân công trực tiếp</div>
<div class="tab" style="left:673px;top:655px;width:86px;height:29px">Chi phí máy</div>
<div class="tab" style="left:762px;top:655px;width:98px;height:29px">Chi phí CCDC</div>
<div class="tab" style="left:863px;top:655px;width:103px;height:29px">Gia công ngoài</div>
<div class="tab" style="left:969px;top:655px;width:104px;height:29px">Sản xuất chung</div>
<div class="tab" style="left:1077px;top:655px;width:108px;height:29px">Chi phí tài chính</div>
<div class="tab" style="left:1189px;top:655px;width:111px;height:29px">Tổng hợp chi phí</div>
<div class="tab" style="left:1304px;top:655px;width:185px;height:29px">Quy cách đóng gói - giao hàng</div>
<div class="abs" style="left:236px;top:696px;font-size:14px;line-height:17px;color:#111;white-space:nowrap"><b>1. Quy trình công nghệ (Công đoạn) sản xuất thành phẩm:</b> (SPTEST01) BÁNH RĂNG 100*200*40</div>
<div class="abs" style="left:235px;top:722px;width:1670px;height:153px;border:1px solid #e3e6e9"></div>
<table class="bt" style="width:1231px">
<colgroup><col style="width:30px"><col style="width:400px"><col style="width:120px"><col style="width:160px"><col style="width:160px"><col style="width:200px"><col style="width:160px"></colgroup>
<tr class="h"><td>STT</td><td>Tên quy trình - công đoạn</td><td>Thời gian SX (phút)</td><td>Thời gian Setup (phút)</td><td>Chi phí/phút</td><td>Tổng chi phí</td><td>Mã - Tên máy sử dụng</td></tr>
<tr><td class="c" style="background:#f0f0f0">1</td><td class="dd">(PHAY) PHAY<span class="caret"></span></td><td class="r">1</td><td class="r">5</td><td class="r">21.500</td><td class="r">21.500</td><td class="dd">CDXD-01-K<span class="caret"></span></td></tr>
<tr><td class="c" style="background:#f0f0f0">2</td><td class="dd">(PHAY TINH) PHAY TINH<span class="caret"></span></td><td class="r">1</td><td class="r">5</td><td class="r">6.000</td><td class="r">6.000</td><td class="dd">CDXD-02-K<span class="caret"></span></td></tr>
<tr><td class="c" style="background:#f0f0f0">3</td><td class="dd">(PHAY THO) PHAY THÔ<span class="caret"></span></td><td class="r">1</td><td class="r">5</td><td class="r">5.000</td><td class="r">5.000</td><td class="dd">CDXD-01-L<span class="caret"></span></td></tr>
<tr class="f"><td></td><td></td><td class="r">3</td><td class="r">15</td><td></td><td class="r">32.500</td><td></td></tr>
</table>
</div></body></html>
